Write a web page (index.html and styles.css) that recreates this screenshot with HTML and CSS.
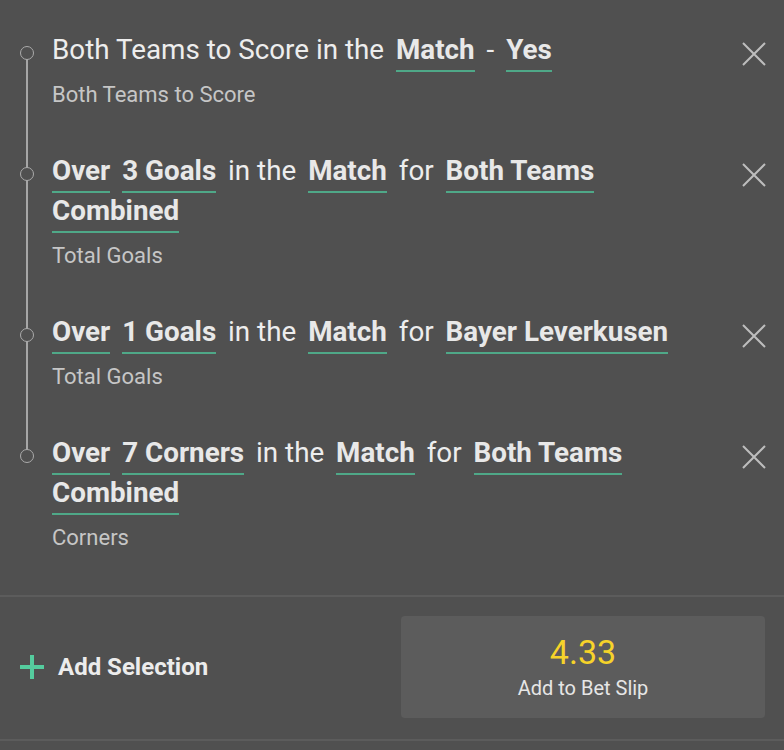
FILE: index.html
```html
<!DOCTYPE html>
<html lang="en">
<head>
<meta charset="utf-8">
<title>Bet Builder</title>
<link rel="stylesheet" href="styles.css">
</head>
<body>
<div class="panel">
  <ul class="legs">
    <li class="leg">
      <span class="dot"></span>
      <div class="leg-body">
        <div class="leg-title"><span class="seg">Both Teams to Score in the</span> <span class="seg tok">Match</span> <span class="seg">-</span> <span class="seg tok">Yes</span></div>
        <div class="leg-market">Both Teams to Score</div>
      </div>
      <button class="close" aria-label="Remove"><svg viewBox="0 0 24 24" width="24" height="24"><path d="M1 1 L23 23 M23 1 L1 23" stroke="#bdbdbd" stroke-width="2" fill="none"/></svg></button>
    </li>
    <li class="leg">
      <span class="dot"></span>
      <div class="leg-body">
        <div class="leg-title"><span class="seg tok">Over</span> <span class="seg tok">3 Goals</span> <span class="seg">in the</span> <span class="seg tok">Match</span> <span class="seg">for</span> <span class="seg tok">Both Teams</span> <span class="seg tok">Combined</span></div>
        <div class="leg-market">Total Goals</div>
      </div>
      <button class="close" aria-label="Remove"><svg viewBox="0 0 24 24" width="24" height="24"><path d="M1 1 L23 23 M23 1 L1 23" stroke="#bdbdbd" stroke-width="2" fill="none"/></svg></button>
    </li>
    <li class="leg">
      <span class="dot"></span>
      <div class="leg-body">
        <div class="leg-title"><span class="seg tok">Over</span> <span class="seg tok">1 Goals</span> <span class="seg">in the</span> <span class="seg tok">Match</span> <span class="seg">for</span> <span class="seg tok">Bayer Leverkusen</span></div>
        <div class="leg-market">Total Goals</div>
      </div>
      <button class="close" aria-label="Remove"><svg viewBox="0 0 24 24" width="24" height="24"><path d="M1 1 L23 23 M23 1 L1 23" stroke="#bdbdbd" stroke-width="2" fill="none"/></svg></button>
    </li>
    <li class="leg">
      <span class="dot"></span>
      <div class="leg-body">
        <div class="leg-title"><span class="seg tok">Over</span> <span class="seg tok">7 Corners</span> <span class="seg">in the</span> <span class="seg tok">Match</span> <span class="seg">for</span> <span class="seg tok">Both Teams</span> <span class="seg tok">Combined</span></div>
        <div class="leg-market">Corners</div>
      </div>
      <button class="close" aria-label="Remove"><svg viewBox="0 0 24 24" width="24" height="24"><path d="M1 1 L23 23 M23 1 L1 23" stroke="#bdbdbd" stroke-width="2" fill="none"/></svg></button>
    </li>
  </ul>
  <div class="footer">
    <button class="add-sel">
      <svg viewBox="0 0 24 24" width="24" height="24"><path d="M12 0 V24 M0 12 H24" stroke="#55cc9e" stroke-width="4" fill="none"/></svg>
      <span>Add Selection</span>
    </button>
    <button class="slip">
      <span class="odds">4.33</span>
      <span class="slip-label">Add to Bet Slip</span>
    </button>
  </div>
</div>
</body>
</html>
```
FILE: styles.css
```css
* { box-sizing: border-box; }
html, body {
  margin: 0;
  padding: 0;
  background: #505050;
}
body {
  font-family: Roboto, "Noto Sans", Arial, sans-serif;
  color: #ececec;
  width: 784px;
  height: 750px;
  overflow: hidden;
}
.panel {
  padding-top: 9px;
}
.legs {
  list-style: none;
  margin: 0;
  padding: 0 0 22px 0;
}
.leg {
  position: relative;
  display: grid;
  grid-template-columns: 52px 1fr 24px;
  padding: 21px 18px 21px 0;
}
.leg::after {
  content: "";
  position: absolute;
  left: 26px;
  top: 44px;
  bottom: -44px;
  width: 2px;
  background: #a6a6a6;
}
.leg:last-child::after {
  display: none;
}
.dot {
  position: relative;
  z-index: 1;
  width: 14px;
  height: 14px;
  margin: 16px 0 0 20px;
  border: 1.6px solid #ababab;
  border-radius: 50%;
  background: #505050;
}
.leg-body {
  padding-right: 20px;
}
.leg-title {
  font-size: 27.8px;
  line-height: 40px;
  color: #ededed;
}
.seg {
  margin-right: 5px;
}
.tok {
  font-weight: 700;
  color: #e8e8e8;
  padding-bottom: 4px;
  border-bottom: 2px solid #4fa888;
}
.leg-market {
  margin-top: 11px;
  font-size: 22px;
  line-height: 28px;
  color: #c6c6c6;
}
.close {
  align-self: start;
  margin-top: 12px;
  width: 24px;
  height: 24px;
  padding: 0;
  border: 0;
  background: none;
  display: block;
}
.close svg { display: block; }
.footer {
  display: flex;
  align-items: center;
  justify-content: space-between;
  border-top: 2px solid #5c5c5c;
  border-bottom: 2px solid #5c5c5c;
  padding: 19px 19px 21px 20px;
}
.add-sel {
  display: flex;
  align-items: center;
  gap: 14px;
  padding: 0;
  border: 0;
  background: none;
  font-family: inherit;
  font-size: 24px;
  font-weight: 700;
  color: #ececec;
}
.add-sel svg { display: block; }
.slip {
  width: 364px;
  height: 102px;
  display: flex;
  flex-direction: column;
  align-items: center;
  padding: 17px 0 0 0;
  border: 0;
  border-radius: 4px;
  background: #5c5c5c;
  font-family: inherit;
}
.odds {
  font-size: 34px;
  line-height: 38px;
  color: #f6d32a;
}
.slip-label {
  margin-top: 3px;
  font-size: 20px;
  line-height: 28px;
  color: #e6e6e6;
}
```
